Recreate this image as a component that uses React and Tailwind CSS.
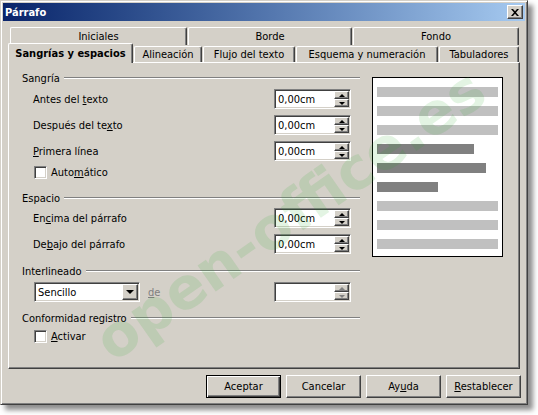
import React from 'react';

// Classic Win2000 3D helpers
const raised = 'border border-t-white border-l-white border-r-[#404040] border-b-[#404040] shadow-[inset_-1px_-1px_0_#808080]';
const sunken = 'border border-t-[#808080] border-l-[#808080] border-r-white border-b-white shadow-[inset_1px_1px_0_#404040,inset_-1px_-1px_0_#d4d0c8]';

const Arrow = ({ up, disabled }) => (
  <div
    className={
      up
        ? `w-0 h-0 border-l-[3px] border-r-[3px] border-b-[3px] border-l-transparent border-r-transparent ${disabled ? 'border-b-[#808080]' : 'border-b-black'}`
        : `w-0 h-0 border-l-[3px] border-r-[3px] border-t-[3px] border-l-transparent border-r-transparent ${disabled ? 'border-t-[#808080]' : 'border-t-black'}`
    }
  />
);

const SpinField = ({ value, disabled }) => (
  <div className={`w-[77px] h-[20px] flex bg-white ${sunken} p-[1px]`}>
    <div className="flex-1 flex items-center pl-[2px] leading-none">{value}</div>
    <div className="w-[15px] flex flex-col">
      <div className={`h-[8px] bg-[#d4d0c8] flex items-center justify-center ${raised}`}>
        <Arrow up disabled={disabled} />
      </div>
      <div className={`h-[8px] bg-[#d4d0c8] flex items-center justify-center ${raised}`}>
        <Arrow disabled={disabled} />
      </div>
    </div>
  </div>
);

const Checkbox = () => <div className={`w-[13px] h-[13px] bg-white ${sunken}`} />;

const GroupHeading = ({ label, className = '' }) => (
  <div className={`h-[14px] flex items-center ${className}`}>
    <span className="leading-none">{label}</span>
    <div className="flex-1 ml-[4px] h-[2px] border-t border-t-[#808080] border-b border-b-white" />
  </div>
);

const SpinRow = ({ children, className = '' }) => (
  <div className={`h-[20px] flex items-center pl-[11px] ${className}`}>
    <div className="w-[241px] leading-none">{children}</div>
    <SpinField value="0,00cm" />
  </div>
);

const CheckRow = ({ children, className = '' }) => (
  <div className={`h-[14px] flex items-center pl-[12px] gap-[4px] ${className}`}>
    <Checkbox />
    <span className="leading-none">{children}</span>
  </div>
);

const Tab = ({ label, w, selected, back }) => (
  <div
    className={`flex items-center justify-center bg-[#d4d0c8] rounded-t-[2px] border-l border-t border-l-white border-t-white border-r border-r-[#404040] shadow-[inset_-1px_0_0_#808080] ${
      selected ? 'h-[20px] -mb-px relative z-10 font-bold' : back ? 'h-[18px]' : 'h-[16px]'
    }`}
    style={{ width: w }}
  >
    <span className="leading-none">{label}</span>
  </div>
);

const Button = ({ children, def }) => (
  <div
    className={
      def
        ? 'w-[75px] h-[23px] flex items-center justify-center border border-black shadow-[inset_1px_1px_0_#fff,inset_-1px_-1px_0_#404040,inset_-2px_-2px_0_#808080]'
        : `w-[75px] h-[23px] flex items-center justify-center ${raised}`
    }
  >
    <span className="leading-none">{children}</span>
  </div>
);

const previewLines = [121, 121, 121, 97, 109, 61, 121, 121, 121];

export default function App() {
  return (
    <div className="w-[538px] h-[415px] bg-white relative overflow-hidden text-[11px] text-black font-['DejaVu_Sans_Condensed','DejaVu_Sans',sans-serif]">
      <div className="w-[528px] h-[405px] bg-[#d4d0c8] border border-t-[#d4d0c8] border-l-[#d4d0c8] border-r-[#404040] border-b-[#404040] p-[2px] flex flex-col shadow-[inset_1px_1px_0_#fff,inset_-1px_-1px_0_#808080,5px_5px_5px_rgba(0,0,0,0.45)]">
        {/* Title bar */}
        <div className="h-[18px] flex items-center bg-linear-to-r from-[#0a246a] to-[#a6caf0] pl-[2px] pr-[2px]">
          <span className="text-white font-bold leading-none">Párrafo</span>
          <div className={`ml-auto w-[16px] h-[14px] bg-[#d4d0c8] flex items-center justify-center ${raised}`}>
            <svg width="8" height="7" viewBox="0 0 8 7">
              <path d="M0 0h2l2 2.3L6 0h2L5 3.5 8 7H6L4 4.7 2 7H0l3-3.5z" fill="#000" />
            </svg>
          </div>
        </div>

        {/* Tabs */}
        <div className="mt-[6px] pl-[7px] flex gap-[1px]">
          <Tab back label="Iniciales" w={177} />
          <Tab back label="Borde" w={164} />
          <Tab back label="Fondo" w={166} />
        </div>
        <div className="-mt-[2px] h-[19px] pl-[5px] flex items-end gap-[1px] relative z-10">
          <Tab selected label="Sangrías y espacios" w={125} />
          <Tab label="Alineación" w={68} />
          <Tab label="Flujo del texto" w={92} />
          <Tab label="Esquema y numeración" w={142} />
          <Tab label="Tabuladores" w={80} />
        </div>

        {/* Panel */}
        <div className="ml-[5px] w-[512px] h-[307px] flex pl-[13px] border border-t-white border-l-white border-r-[#404040] border-b-[#404040] shadow-[inset_-1px_-1px_0_#808080]">
          <div className="w-[338px] flex flex-col pt-[8px]">
            <GroupHeading label="Sangría" />
            <SpinRow className="mt-[4px]">
              Antes del <span className="underline">t</span>exto
            </SpinRow>
            <SpinRow className="mt-[6px]">
              Después del te<span className="underline">x</span>to
            </SpinRow>
            <SpinRow className="mt-[6px]">
              <span className="underline">P</span>rimera línea
            </SpinRow>
            <CheckRow className="mt-[4px]">
              Auto<span className="underline">m</span>ático
            </CheckRow>

            <GroupHeading label="Espacio" className="mt-[12px]" />
            <SpinRow className="mt-[3px]">
              En<span className="underline">c</span>ima del párrafo
            </SpinRow>
            <SpinRow className="mt-[6px]">
              De<span className="underline">b</span>ajo del párrafo
            </SpinRow>

            <GroupHeading label="Interlineado" className="mt-[10px]" />
            <div className="mt-[4px] h-[20px] flex items-center pl-[12px] pr-[9px]">
              <div className={`w-[106px] h-[20px] flex bg-white ${sunken} p-[1px]`}>
                <div className="flex-1 flex items-center pl-[2px] leading-none">Sencillo</div>
                <div className={`w-[16px] bg-[#d4d0c8] flex items-center justify-center ${raised}`}>
                  <div className="w-0 h-0 border-l-[4px] border-r-[4px] border-t-[4px] border-l-transparent border-r-transparent border-t-black" />
                </div>
              </div>
              <span className="ml-[8px] leading-none text-[#808080]">
                <span className="underline">d</span>e
              </span>
              <div className="ml-auto">
                <SpinField value="" disabled />
              </div>
            </div>

            <GroupHeading label="Conformidad registro" className="mt-[9px]" />
            <CheckRow className="mt-[4px]">
              <span className="underline">A</span>ctivar
            </CheckRow>
          </div>

          {/* Preview */}
          <div className="ml-[12px] mt-[14px] w-[131px] h-[180px] bg-white border border-black pt-[9px] pl-[4px] flex flex-col gap-[9px]">
            {previewLines.map((w, i) => (
              <div
                key={i}
                className={`h-[10px] ${i >= 3 && i <= 5 ? 'bg-[#808080]' : 'bg-[#c0c0c0]'}`}
                style={{ width: w }}
              />
            ))}
          </div>
        </div>

        {/* Buttons */}
        <div className="mt-[6px] pr-[4px] flex justify-end gap-[5px]">
          <Button def>Aceptar</Button>
          <Button>Cancelar</Button>
          <Button>
            Ay<span className="underline">u</span>da
          </Button>
          <Button>
            <span className="underline">R</span>establecer
          </Button>
        </div>
      </div>

      {/* Watermark */}
      <div className="absolute left-[290px] top-[215px] -translate-x-1/2 -translate-y-1/2 -rotate-[35deg] whitespace-nowrap text-[58px] font-bold leading-none text-[rgba(40,170,40,0.13)] pointer-events-none font-['DejaVu_Sans',sans-serif]">
        open-office.es
      </div>
    </div>
  );
}
